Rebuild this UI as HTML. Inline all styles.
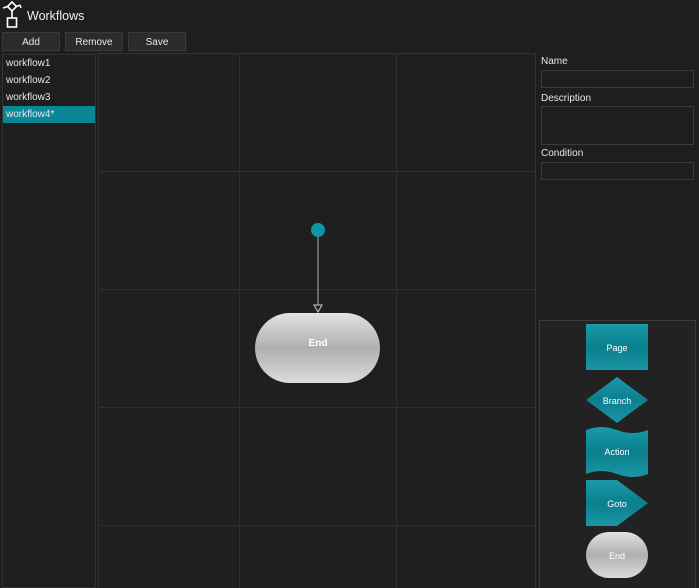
<!DOCTYPE html>
<html><head><style>
body{margin:0;width:699px;height:588px;background:#1e1e1e;font-family:"Liberation Sans",sans-serif;color:#e8e8e8;overflow:hidden;position:relative;font-size:10px}
.a{position:absolute}
.btn{position:absolute;top:32px;height:19px;background:#2b2b2b;border:1px solid #3a3a3a;box-sizing:border-box;text-align:center;line-height:19px;font-size:10px}
.item{position:absolute;left:3px;width:92px;height:17px;line-height:18px;padding-left:3px;box-sizing:border-box;font-size:10px}
.inp{position:absolute;left:541px;width:153px;border:1px solid #3a3a3a;box-sizing:border-box;background:#1e1e1e}
.lbl{position:absolute;left:541px;font-size:10px}
</style></head><body>
<svg class="a" style="left:0;top:0" width="30" height="30">
<g fill="none" stroke="#fff" stroke-width="1.6">
<path d="M12 2 L16.5 6.5 L12 11 L7.5 6.5 Z"/><path d="M7.5 6.5 L3 8 M16.5 6.5 L20 5 M20 5 L21 8"/><path d="M12 11 L12 18"/><rect x="7.5" y="18" width="9" height="9"/>
</g></svg>
<div class="a" style="left:27px;top:9px;font-size:12.5px;color:#f0f0f0">Workflows</div>
<div class="btn" style="left:2px;width:58px">Add</div>
<div class="btn" style="left:65px;width:58px">Remove</div>
<div class="btn" style="left:128px;width:58px">Save</div>
<div class="a" style="left:2px;top:54px;width:94px;height:534px;border:1px solid #333;box-sizing:border-box;background:#1e1e1e"></div>
<div class="item" style="top:55px">workflow1</div>
<div class="item" style="top:72px">workflow2</div>
<div class="item" style="top:89px">workflow3</div>
<div class="item" style="top:106px;background:#0a8796">workflow4*</div>
<svg class="a" style="left:98px;top:53px" width="438" height="535">
<rect x="0.5" y="0.5" width="437" height="540" fill="#1f1f1f" stroke="#333"/>
<g stroke="#2e2e2e" stroke-width="1">
<line x1="141.5" y1="0" x2="141.5" y2="535"/><line x1="298.5" y1="0" x2="298.5" y2="535"/>
<line x1="0" y1="118.5" x2="438" y2="118.5"/><line x1="0" y1="236.5" x2="438" y2="236.5"/>
<line x1="0" y1="354.5" x2="438" y2="354.5"/><line x1="0" y1="472.5" x2="438" y2="472.5"/>
</g>
<defs>
<linearGradient id="g" x1="0" y1="0" x2="0" y2="1"><stop offset="0" stop-color="#e2e2e2"/><stop offset="0.5" stop-color="#b0b0b0"/><stop offset="1" stop-color="#dcdcdc"/></linearGradient>
</defs>
<line x1="220" y1="184" x2="220" y2="253" stroke="#aaa"/>
<path d="M216 252 L224 252 L220 259 Z" fill="#1f1f1f" stroke="#ccc"/>
<circle cx="220" cy="177" r="7" fill="#0f96a6"/>
<rect x="157" y="260" width="125" height="70" rx="35" fill="url(#g)"/>
<text x="220" y="293" fill="#fff" font-size="10" font-weight="bold" text-anchor="middle">End</text>
</svg>
<div class="lbl" style="top:56px">Name</div>
<div class="inp" style="top:70px;height:18px"></div>
<div class="lbl" style="top:93px">Description</div>
<div class="inp" style="top:106px;height:39px"></div>
<div class="lbl" style="top:148px">Condition</div>
<div class="inp" style="top:162px;height:18px"></div>
<svg class="a" style="left:539px;top:320px" width="157" height="268">
<defs>
<linearGradient id="t" x1="0" y1="0" x2="0" y2="1"><stop offset="0" stop-color="#1a9aaa"/><stop offset="0.5" stop-color="#0b7f8e"/><stop offset="1" stop-color="#1a95a4"/></linearGradient>
<linearGradient id="g2" x1="0" y1="0" x2="0" y2="1"><stop offset="0" stop-color="#e2e2e2"/><stop offset="0.5" stop-color="#b0b0b0"/><stop offset="1" stop-color="#dcdcdc"/></linearGradient>
</defs>
<rect x="0.5" y="0.5" width="156" height="270" fill="#222" stroke="#3a3a3a"/>
<g fill="url(#t)">
<rect x="47" y="4" width="62" height="46"/>
<path d="M78 57 L109 80 L78 103 L47 80 Z"/>
<path d="M47 110 Q62 104 78 110 Q94 116 109 110 L109 154 Q94 160 78 154 Q62 148 47 154 Z"/>
<path d="M47 160 L78 160 L109 183 L78 206 L47 206 Z"/>
</g>
<rect x="47" y="212" width="62" height="46" rx="23" fill="url(#g2)"/>
<g fill="#fff" font-size="9" text-anchor="middle">
<text x="78" y="31">Page</text><text x="78" y="84">Branch</text><text x="78" y="135">Action</text><text x="78" y="187">Goto</text><text x="78" y="239">End</text>
</g>
</svg>
</body></html>
